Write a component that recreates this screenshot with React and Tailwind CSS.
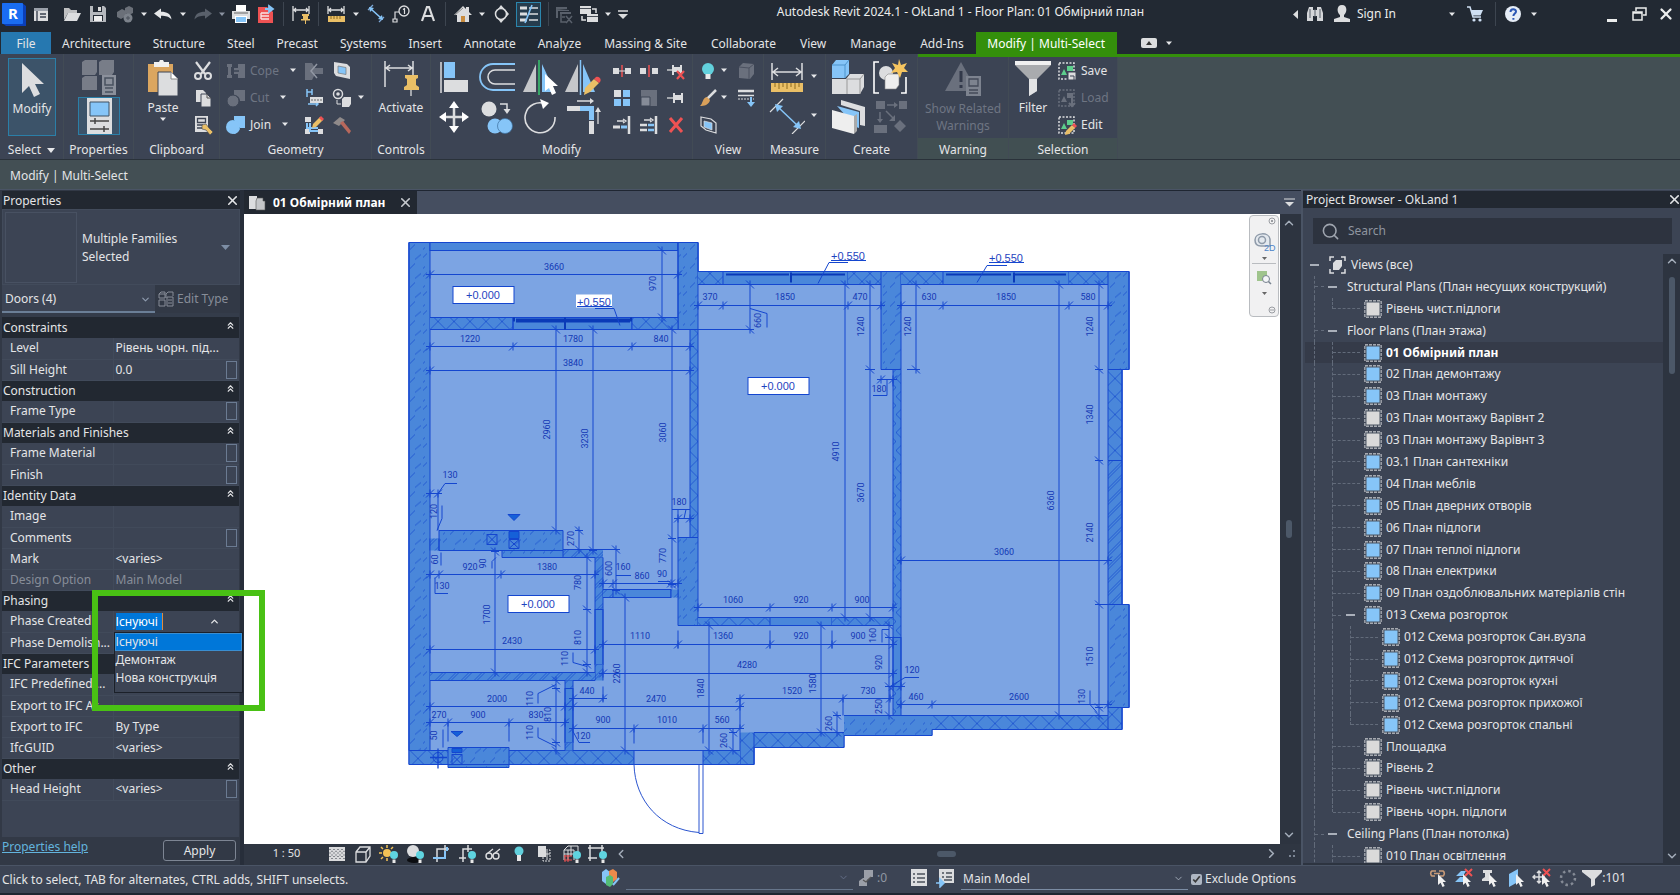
import { useState } from "react";
import { ChevronDown, ChevronLeft, ChevronRight, ChevronUp, ChevronsUp, Search, X } from "lucide-react";

const L = "#dcdddf";
const B = "#86c5f8";
const G = "#6a707d";
const Y = "#eabf66";
const R = "#ee5253";

const TABS = [
  "Architecture",
  "Structure",
  "Steel",
  "Precast",
  "Systems",
  "Insert",
  "Annotate",
  "Analyze",
  "Massing & Site",
  "Collaborate",
  "View",
  "Manage",
  "Add-Ins",
];

const PROPERTIES = [
  { group: "Constraints" },
  { name: "Level", value: "Рівень чорн. під..." },
  { name: "Sill Height", value: "0.0", assoc: true },
  { group: "Construction" },
  { name: "Frame Type", value: "", assoc: true },
  { group: "Materials and Finishes" },
  { name: "Frame Material", value: "", assoc: true },
  { name: "Finish", value: "", assoc: true },
  { group: "Identity Data" },
  { name: "Image", value: "" },
  { name: "Comments", value: "", assoc: true },
  { name: "Mark", value: "<varies>" },
  { name: "Design Option", value: "Main Model", disabled: true },
  { group: "Phasing" },
  { name: "Phase Created", phase: true },
  { name: "Phase Demolish...", value: "" },
  { group: "IFC Parameters" },
  { name: "IFC Predefined ...", value: "" },
  { name: "Export to IFC As", value: "" },
  { name: "Export to IFC", value: "By Type" },
  { name: "IfcGUID", value: "<varies>" },
  { group: "Other" },
  { name: "Head Height", value: "<varies>", assoc: true },
];

const PHASES = ["Існуючі", "Демонтаж", "Нова конструкція"];

// level, label, icon (b = on sheet, g = not on sheet), open node, last child
const TREE = [
  { level: 0, label: "Views (все)", open: true },
  { level: 1, label: "Structural Plans (План несущих конструкций)", open: true },
  { level: 2, label: "Рівень чист.підлоги", icon: "g", last: true },
  { level: 1, label: "Floor Plans (План этажа)", open: true },
  { level: 2, label: "01 Обмірний план", icon: "b", active: true },
  { level: 2, label: "02 План демонтажу", icon: "b" },
  { level: 2, label: "03 План монтажу", icon: "b" },
  { level: 2, label: "03 План монтажу Варівнт 2", icon: "g" },
  { level: 2, label: "03 План монтажу Варівнт 3", icon: "g" },
  { level: 2, label: "03.1 План сантехніки", icon: "b" },
  { level: 2, label: "04 План меблів", icon: "b" },
  { level: 2, label: "05 План дверних отворів", icon: "b" },
  { level: 2, label: "06 План підлоги", icon: "b" },
  { level: 2, label: "07 План теплої підлоги", icon: "b" },
  { level: 2, label: "08 План електрики", icon: "b" },
  { level: 2, label: "09 План оздоблювальних матеріалів стін", icon: "b" },
  { level: 2, label: "013 Схема розгорток", icon: "b", open: true },
  { level: 3, label: "012 Схема розгорток Сан.вузла", icon: "b" },
  { level: 3, label: "012 Схема розгорток дитячої", icon: "b" },
  { level: 3, label: "012 Схема розгорток кухні", icon: "b" },
  { level: 3, label: "012 Схема розгорток прихожої", icon: "b" },
  { level: 3, label: "012 Схема розгорток спальні", icon: "b", last: true },
  { level: 2, label: "Площадка", icon: "g" },
  { level: 2, label: "Рівень 2", icon: "g" },
  { level: 2, label: "Рівень чист.підлоги", icon: "g" },
  { level: 2, label: "Рівень чорн. підлоги", icon: "g", last: true },
  { level: 1, label: "Ceiling Plans (План потолка)", open: true },
  { level: 2, label: "010 План освітлення", icon: "g" },
];

/* ---------- icons ---------- */

const S = ({ s = 20, children }) => (
  <svg width={s} height={s} viewBox={`0 0 ${s} ${s}`} fill="none" className="shrink-0">
    {children}
  </svg>
);

const Caret = ({ dim }) => (
  <svg width="8" height="5" viewBox="0 0 8 5" className="shrink-0">
    <path d="M1 0.5h6L4 4z" fill={dim ? "#8b93a1" : "#e6e7ea"} />
  </svg>
);

const Bulb = ({ x = 0, y = 0 }) => (
  <g transform={`translate(${x} ${y})`}>
    <circle cx="4" cy="4" r="4" fill="#5fd4e0" />
    <path d="M2.5 8.5h3v3.5h-3z" fill="#e8e8e8" />
  </g>
);

const Cursor = ({ x = 0, y = 0 }) => (
  <path transform={`translate(${x} ${y})`} d="M0 0v11l2.6-2.3L4.5 13l2.2-1-1.9-4H8z" fill="#f0f0f0" />
);

const RevitLogo = () => (
  <svg width="25" height="25" viewBox="0 0 25 25" className="shrink-0">
    <path d="M1 1h20l4 3v20H5l-4-3z" fill="#0b3fb8" />
    <rect x="1" y="1" width="21" height="21" rx="1" fill="#1a6df2" />
    <text x="12" y="17" fontSize="15" fontWeight="700" fill="#fff" textAnchor="middle" fontFamily="Noto Sans, sans-serif">
      R
    </text>
  </svg>
);

const ICONS = {
  ui: (
    <S>
      <path d="M3 4h14v13H3z" fill={L} />
      <path d="M3 4h14v3H3z" fill="#9aa0aa" />
      <path d="M6 7v10M9 10h6M9 13h6" stroke="#3a4250" strokeWidth="1.4" />
    </S>
  ),
  open: (
    <S>
      <path d="M2 16V4h5l2 2h6v3H6L2 16z" fill="#bfc0c2" />
      <path d="M6 9h13l-4 8H2z" fill={L} />
    </S>
  ),
  save: (
    <S>
      <path d="M2 2h14l2 2v14H2z" fill="#b5b8bd" />
      <path d="M5 2h9v6H5zM5 11h10v6H5z" fill="#222933" />
      <path d="M6 12h8v5H6z" fill="#eee" />
      <path d="M10 3h3v4h-3z" fill="#ddd" />
    </S>
  ),
  sync: (
    <S>
      <path d="M2 8l5-3 4 2v5l-5 3-4-2zM10 4l4-2 4 2v5l-4 2-4-2z" fill="#6b7079" />
      <circle cx="13" cy="14" r="4.5" fill="#7c828b" />
      <path d="M11 14h4M13 12v4" stroke="#4a505b" />
    </S>
  ),
  undo: (
    <S>
      <path d="M1 9.500l7-5v3.200c6 0 10 2 10.500 7.800C16 12.500 13 11.700 8 11.700v3z" fill="#e6e7e9" />
    </S>
  ),
  redo: (
    <S>
      <path d="M19 9.500l-7-5v3.200c-6 0-10 2-10.500 7.800C4 12.500 7 11.700 12 11.700v3z" fill="#59606b" />
    </S>
  ),
  print: (
    <S>
      <path d="M5 1h10v6H5z" fill="#fff" />
      <path d="M1 7h18v8H1z" fill={L} />
      <path d="M3 9h14" stroke="#666" />
      <path d="M4 12h12v7H4z" fill="#fff" />
      <path d="M5 13h10v5H5z" fill={B} />
    </S>
  ),
  pdf: (
    <S>
      <path d="M2 3h9l6 5v11H2z" fill={R} />
      <path d="M5 9h8M5 12h8M5 15h8M5 15v-6" stroke="#fbe3e3" strokeWidth="1.300" />
      <path d="M9 5h6M13 2l4 3-4 3z" stroke={B} strokeWidth="1.800" fill={B} />
    </S>
  ),
  pinDim: (
    <S>
      <path d="M2 2v15M18 2v8M3 6h14M5 4L3 6l2 2M15 4l2 2-2 2" stroke={L} strokeWidth="1.300" />
      <path d="M11 10h7v2h-1v3h2v1.500h-9V15h2v-3h-1z" fill={Y} />
      <path d="M14.500 16v4" stroke={Y} />
    </S>
  ),
  measure: (
    <S>
      <path d="M2 2v8M18 2v8M3 6h14M5 4L3 6l2 2M15 4l2 2-2 2" stroke={L} strokeWidth="1.300" />
      <path d="M2 12h17v6H2z" fill={Y} />
      <path d="M5 12v3M8 12v3M11 12v3M14 12v3" stroke="#8d6a1c" />
    </S>
  ),
  aligned: (
    <S>
      <path d="M2 6l5-5M13 18l5-5" stroke="#7fa9d8" strokeWidth="1.300" />
      <path d="M5 5l10 9" stroke={B} strokeWidth="1.600" />
      <path d="M3 3l5 1-4 4zM17 16l-5-1 4-4z" fill={B} />
    </S>
  ),
  tag: (
    <S>
      <circle cx="13" cy="7" r="5" stroke={L} strokeWidth="1.300" />
      <path d="M12 5.500L13.500 4.500V10M8 8H4v7M2 15h4v3H2z" stroke={L} strokeWidth="1.200" />
    </S>
  ),
  text: (
    <S>
      <path d="M4 17L9 3h2l5 14M6 12h8" stroke={L} strokeWidth="2.200" />
    </S>
  ),
  home: (
    <S>
      <path d="M10 2L1 11h3v7h12v-7h3l-3-3V3h-3v2z" fill={L} />
      <path d="M10 4l-8 7" stroke="#888" />
      <path d="M8 12h4v6H8z" fill="#c98c3f" />
    </S>
  ),
  section: (
    <S>
      <path d="M10 1l8 9-8 9-3-4h6V5H7z" fill={L} />
      <circle cx="10" cy="10" r="5.500" fill="#222933" stroke={L} strokeWidth="1.500" />
    </S>
  ),
  thin: (
    <S>
      <path d="M1 4h7M1 10h7M1 16h7" stroke={L} strokeWidth="3" />
      <path d="M10 4h9M10 10h9M10 16h9" stroke={L} strokeWidth="1.300" />
      <path d="M13 1L6 19" stroke={B} strokeWidth="1.600" />
    </S>
  ),
  closeInactive: (
    <S>
      <path d="M2 3h11v2H2zM2 5v9h2V7h11V6M6 8h11v2H6z" fill="#59606b" />
      <path d="M7 9v9h5M12 12l6 7M18 12l-6 7M8 13h3" stroke="#59606b" strokeWidth="1.500" />
    </S>
  ),
  switchWin: (
    <S>
      <path d="M1 2h11v8H1zM8 10h11v8H8z" fill={L} />
      <path d="M1 4.500h11M8 12.500h11" stroke="#222933" strokeWidth=".8" />
      <path d="M13 5h4v4M3 12v4h4" stroke={L} strokeWidth="1.500" />
    </S>
  ),
  customize: (
    <S>
      <path d="M5 7h10" stroke={L} strokeWidth="1.500" />
      <path d="M5 10h10l-5 5z" fill={L} />
    </S>
  ),
  binoculars: (
    <S>
      <path d="M4 3h4v3h4V3h4l2 6v8h-6v-5H8v5H2V9z" fill="#d4d6d9" />
      <path d="M10 5v8M5 5v9M15 5v9" stroke="#555c67" />
    </S>
  ),
  user: (
    <S>
      <path d="M10 1c6 0 5 8 2 10v2l6 2v3H2v-3l6-2v-2C5 9 4 1 10 1z" fill={L} />
    </S>
  ),
  cart: (
    <S>
      <path d="M2 3h3l3 10h8" stroke="#cfe0f4" strokeWidth="1.500" />
      <path d="M6 6h12l-2.500 5.500H8z" fill="#cfe0f4" />
      <circle cx="9" cy="16" r="1.600" fill="#cfe0f4" />
      <circle cx="15" cy="16" r="1.600" fill="#cfe0f4" />
    </S>
  ),
  help: (
    <S>
      <circle cx="10" cy="10" r="8" fill="#e6edf7" />
      <path d="M7.500 8c0-3.500 5.500-3.500 5.500-.5 0 2-2.600 2-2.600 4.500M10.400 14v1.800" stroke="#2b57b5" strokeWidth="2" />
    </S>
  ),
  // ribbon
  modify: (
    <S s={36}>
      <path d="M8 1v30l7-7 5 11 6-3-5-10h9z" fill={L} />
    </S>
  ),
  typeProps: (
    <S s={36}>
      <path d="M1 3l3-2h12v12l-2 3H1zM18 3l3-2h12v12l-2 3H18zM1 19l3-2h12v14H1z" fill="#787d88" />
      <path d="M21 16h14v20H21z" fill="#8b909b" />
      <path d="M24 19h8v7h-8zM24 29h8M24 33h8" stroke="#4a5160" strokeWidth="1.500" />
    </S>
  ),
  properties: (
    <S s={36}>
      <path d="M6 0h25v36H6z" fill={L} />
      <path d="M9 4h19v14H9z" fill={B} stroke="#3f5063" />
      <path d="M9 23h19M14 20v6M9 31h19M23 28v6" stroke="#444" strokeWidth="1.500" />
    </S>
  ),
  paste: (
    <S s={36}>
      <path d="M3 4h25v28H3z" fill="#dba660" />
      <path d="M9 2h5l1-2h3l1 2h5v5H9z" fill="#f1f1f1" />
      <path d="M13 12h13l7 7v17H13z" fill={L} stroke="#3c4454" />
      <path d="M26 12v7h7" fill="#fff" stroke="#888" />
    </S>
  ),
  cut: (
    <S>
      <path d="M3 1l9 12M17 1L8 13" stroke={L} strokeWidth="2.200" />
      <circle cx="5" cy="15" r="3" stroke={L} strokeWidth="2" />
      <circle cx="15" cy="15" r="3" stroke={L} strokeWidth="2" />
    </S>
  ),
  copyClip: (
    <S>
      <path d="M3 2h7l3 3v9H3z" fill={L} />
      <path d="M8 6h6l4 4v9H8z" fill={L} stroke="#3c4454" />
      <path d="M14 6v4h4" stroke="#555" />
    </S>
  ),
  match: (
    <S>
      <path d="M2 1h13v16H2z" fill={L} />
      <path d="M4.500 3.500h8v4h-8zM4 10h6M4 13h5" stroke="#3c4454" strokeWidth="1.300" />
      <path d="M9 10l4-1 3 4 4 4-3 3-4-5-4-1z" fill={Y} stroke="#3c4454" strokeWidth=".6" />
    </S>
  ),
  cope: (
    <S>
      <path d="M1 3h5v3H5v8h1v3H1v-3h1V6H1zM12 3h7v14h-7v-4h-4V7h4z" fill={G} />
      <path d="M6 10h7" stroke="#3c4454" strokeWidth="1.500" />
    </S>
  ),
  cutGeo: (
    <S>
      <path d="M8 2h11v11h-5a6 6 0 0 0-6-6z" fill={G} />
      <circle cx="7" cy="13" r="6" fill={G} stroke="#3c4454" />
    </S>
  ),
  join: (
    <S>
      <path d="M8 1h11v12h-5a8 8 0 0 1-6 6z" fill={B} />
      <circle cx="7" cy="12" r="7" fill={B} />
      <path d="M8 5v1M14 13h-1" stroke="#5a9dd0" />
    </S>
  ),
  wallJoin: (
    <S>
      <path d="M1 2h7l3 5h8v6h-8l-3 6H1z" fill={G} />
      <path d="M13 3l-6 7 6 7" stroke="#9298a4" strokeWidth="1.500" />
    </S>
  ),
  paint: (
    <S>
      <path d="M2 1l13 2 3 3v12L4 15l-2-3z" fill={L} />
      <path d="M6 5l8 1.500v7L6 12z" fill={B} stroke="#777" strokeWidth=".7" />
    </S>
  ),
  demolishJoin: (
    <S>
      <path d="M3 1v8M8 1v6M3 4h5M4 16h10M12 14l2 2-2 2" stroke={B} strokeWidth="1.500" />
      <path d="M6 9h13v6H6z" fill={L} />
      <path d="M7 12h12" stroke="#666" strokeDasharray="2 1" />
    </S>
  ),
  splitFace: (
    <S>
      <circle cx="6" cy="6" r="4.500" stroke={L} strokeWidth="1.500" />
      <circle cx="6" cy="6" r="1.800" fill={L} />
      <path d="M5 12v4h4" stroke={L} />
      <path d="M10 11l2-2h7v7l-2 3h-7z" fill={L} />
    </S>
  ),
  beam: (
    <S>
      <path d="M1 2h6v5H1zM1 14h5v5H1zM14 14h5v5h-5z" fill={L} />
      <path d="M3 8v5h3v3h8M6 8v5h8" stroke={B} strokeWidth="2" />
      <path d="M9 9l7-7 3 3-7 7-4 1z" fill={Y} />
      <path d="M15 3l2-2 3 3-2 2z" fill={R} />
    </S>
  ),
  hammer: (
    <S>
      <path d="M1 8l7-6 5 3-6 6z" fill="#8f8a8a" />
      <path d="M8 8l3-2 8 10-2 3z" fill="#b8685c" />
    </S>
  ),
  activate: (
    <S s={36}>
      <path d="M2 1v26M30 1v14M3 8h26M7 5L3 8l4 3M25 5l4 3-4 3" stroke={L} strokeWidth="1.500" />
      <path d="M22 15h13v3l-2 1v6l3 2v3H21v-3l3-2v-6l-2-1z" fill={Y} />
      <path d="M28 30v6" stroke={L} strokeWidth="1.300" />
    </S>
  ),
  align: (
    <S s={36}>
      <path d="M5 3v31" stroke={L} strokeWidth="1.500" />
      <path d="M8 3h11v16H8z" fill={B} />
      <path d="M8 21h24v12H8z" fill={L} />
    </S>
  ),
  offset: (
    <S s={36}>
      <path d="M36 5H14a13 13 0 0 0 0 26h22" stroke={B} strokeWidth="1.800" />
      <path d="M36 11H16a7 7 0 0 0 0 14h20" stroke={L} strokeWidth="1.500" />
    </S>
  ),
  mirrorPick: (
    <S s={36}>
      <path d="M14 5v28H1z" fill="#c5c7ca" />
      <path d="M20 5v28h13z" fill={B} />
      <path d="M17 1v35" stroke="#38b26a" strokeWidth="1.800" />
      <path d="M23 15v17l4-3 3 7 4-2-3-7h5z" fill="#fff" />
    </S>
  ),
  mirrorDraw: (
    <S s={36}>
      <path d="M13 5v28H0z" fill="#c5c7ca" />
      <path d="M18 5v28h12z" fill={B} />
      <path d="M15.500 1v35" stroke={B} strokeWidth="1.500" />
      <path d="M20 29l9-9 5 4-9 9-6 3z" fill={Y} />
      <path d="M29 20l2-2c3-1 6 2 4 5l-1 1z" fill={R} />
    </S>
  ),
  move: (
    <S s={36}>
      <path d="M18 8v22M7 19h22" stroke={L} strokeWidth="2.500" />
      <path d="M18 3l5 7H13zM18 35l5-7H13zM3 19l7-5v10zM33 19l-7-5v10z" fill="#fff" />
    </S>
  ),
  copy: (
    <S s={36}>
      <circle cx="10" cy="11" r="7.500" fill={L} />
      <path d="M21 6h7v7" stroke={L} strokeWidth="1.500" />
      <path d="M28 16l-3.500-5h7z" fill={L} />
      <circle cx="16" cy="28" r="7.500" fill={B} />
      <circle cx="26" cy="28" r="7.500" fill={B} stroke="#3c6f9c" strokeWidth=".7" />
    </S>
  ),
  rotate: (
    <S s={36}>
      <path d="M24 6A15 15 0 1 0 33 19" stroke={L} strokeWidth="1.600" />
      <path d="M18 1l9 4-6 6z" fill="#fff" />
    </S>
  ),
  trim: (
    <S s={36}>
      <path d="M2 8h13v5H2zM24 23h5v13h-5z" fill={L} />
      <path d="M15 8h14v14h-5v-9h-9z" fill={B} />
      <path d="M12 3h13M33 26V13" stroke={L} strokeWidth="1.300" />
      <path d="M25 0l4 3-4 3zM30 14l3-5 3 5z" fill={L} />
    </S>
  ),
  split: (
    <S>
      <path d="M1 7h6v6H1zM13 7h6v6h-6z" fill={L} />
      <path d="M10 4v12" stroke={R} strokeWidth="1.500" />
      <path d="M7 10h6" stroke={L} />
    </S>
  ),
  splitGap: (
    <S>
      <path d="M1 7h6v6H1zM13 7h6v6h-6z" fill={L} />
      <path d="M10 4v12" stroke={R} strokeWidth="1.500" />
    </S>
  ),
  unpin: (
    <S>
      <path d="M1 9h5" stroke={L} strokeWidth="1.300" />
      <path d="M6 4h2v2h6V4h2v10h-2v-3H8v3H6z" fill={L} />
      <path d="M11 10l7 8M18 10l-7 8" stroke={R} strokeWidth="2.200" />
    </S>
  ),
  array: (
    <S>
      <path d="M11 11h7v7h-7z" fill={B} />
      <path d="M11 2h7v7h-7zM2 11h7v7H2z" fill={B} />
      <path d="M2 2h7v7H2z" fill={L} />
    </S>
  ),
  scale: (
    <S>
      <path d="M2 2h16v16H2z" fill={G} />
      <path d="M2 9h9v9H2z" fill="#868c98" stroke="#3c4454" />
    </S>
  ),
  pin: (
    <S>
      <path d="M1 10h6" stroke={L} strokeWidth="1.300" />
      <path d="M7 5h2v2h6V5h2v10h-2v-3H9v3H7z" fill={L} />
    </S>
  ),
  trimOne: (
    <S>
      <path d="M17 1v18" stroke={L} strokeWidth="2.500" />
      <path d="M1 12h7" stroke={L} strokeWidth="3" />
      <path d="M9 12h6" stroke={B} strokeWidth="3" />
      <path d="M5 6h7M11 4l3 2-3 2" stroke={L} strokeWidth="1.300" />
    </S>
  ),
  trimMulti: (
    <S>
      <path d="M17 1v18" stroke={L} strokeWidth="2.500" />
      <path d="M1 10h7M1 15h7" stroke={L} strokeWidth="2.500" />
      <path d="M9 10h6M9 15h6" stroke={B} strokeWidth="2.500" />
      <path d="M5 5h7M11 3l3 2-3 2" stroke={L} strokeWidth="1.300" />
    </S>
  ),
  del: (
    <S>
      <path d="M4 3l12 14M16 3L4 17" stroke={R} strokeWidth="3" />
    </S>
  ),
  bulb: (
    <S>
      <circle cx="10" cy="8" r="6" fill="#62d0dc" />
      <path d="M7.500 13h5v5h-5z" fill="#e8e8e8" />
    </S>
  ),
  brush: (
    <S>
      <path d="M18 2l-9 9" stroke={L} strokeWidth="2.500" />
      <path d="M9 9l3 3c-1 5-6 6-10 6 3-2 2-8 7-9z" fill="#d9a05a" />
    </S>
  ),
  box3d: (
    <S>
      <path d="M3 6l4-4 11 1v10l-4 5-11-1z" fill={G} />
      <path d="M3 6l10 1v11M13 7l5-4" stroke="#4b5160" />
    </S>
  ),
  lines: (
    <S>
      <path d="M2 3h16" stroke={L} strokeWidth="2.500" />
      <path d="M2 7.500h16" stroke={L} strokeWidth="1.500" />
      <path d="M2 11h16" stroke={L} strokeDasharray="2 1" />
      <path d="M15 9v6" stroke={B} strokeWidth="2" />
      <path d="M11 14h8l-4 5z" fill={B} />
    </S>
  ),
  selBox: (
    <S>
      <path d="M3 2l10 2 5 4v10L8 15l-5-4z" stroke={L} strokeWidth="1.200" />
      <path d="M6 6l8 2v7L6 12z" fill={B} stroke={L} strokeWidth=".7" />
    </S>
  ),
  tape: (
    <S s={36}>
      <path d="M3 4v17M33 4v17M4 13h28M9 9l-5 4 5 4M27 9l5 4-5 4" stroke={L} strokeWidth="1.500" />
      <path d="M2 24h32v9H2z" fill={Y} />
      <path d="M6 24v4M10 24v6M14 24v4M18 24v6M22 24v4M26 24v6M30 24v4" stroke="#8d6a1c" />
    </S>
  ),
  dim: (
    <S s={36}>
      <path d="M1 14L14 1M23 36l13-13" stroke={L} strokeWidth="1.200" />
      <path d="M9 9l20 19" stroke={B} strokeWidth="1.500" />
      <path d="M6 6l8 2-6 6zM32 31l-8-2 6-6z" fill={B} />
    </S>
  ),
  assembly: (
    <S s={36}>
      <path d="M2 6l4-5h13v14l-4 4H2z" fill={B} />
      <path d="M2 6h13v13M15 6l4-5" stroke="#4c93cc" />
      <path d="M2 20h14l4-5h14v13l-4 7H2z" fill={L} />
      <path d="M17 35V20h13v15M30 20l4-5" stroke="#999" />
    </S>
  ),
  group: (
    <S s={36}>
      <path d="M7 3H2v31h5M29 34h5V18" stroke="#fff" strokeWidth="1.600" />
      <circle cx="14" cy="14" r="7" fill={L} />
      <path d="M13 18l3-3h11v11l-3 4H13z" fill="#eee" stroke="#888" strokeWidth=".6" />
      <path d="M27 0l2 6 6-2-3 5 4 4-6 0-2 6-3-6-6 1 4-5-3-5 6 2z" fill="#f6c560" />
    </S>
  ),
  parts: (
    <S s={36}>
      <path d="M11 2l24 7v19l-5-1V13L11 7z" fill={L} />
      <path d="M7 8l22 6v16l-3-1" fill={B} />
      <path d="M2 12l22 6v18L2 30z" fill="#eee" />
      <path d="M24 18l3-2v17l-3 3z" fill="#aaa" />
    </S>
  ),
  similar: (
    <S s={36}>
      <path d="M4 3h9v8H4zM27 3h8v8h-8zM2 27h13v8H2zM28 22l6 6-6 6-6-6z" fill={G} />
      <path d="M15 7h8M8 14v8M14 13l8 8" stroke={G} strokeWidth="1.500" />
      <path d="M22 4l4 3-4 3zM5 21h6l-3 4zM23 17v6h-6z" fill={G} />
    </S>
  ),
  warning: (
    <S s={36}>
      <path d="M16 2l16 29H0z" fill={G} />
      <path d="M16 11v11M16 25v3" stroke="#32394a" strokeWidth="3" />
      <path d="M21 16h15v20H21z" fill="#7d838f" />
      <path d="M24 19h9v7h-9zM24 30h9M24 33h9" stroke="#444b5a" strokeWidth="1.300" />
    </S>
  ),
  filter: (
    <S s={36}>
      <path d="M0 1h36v4L22 19v12l-8 5V19L0 5z" fill="#a9abae" />
      <path d="M0 1h36v4H0z" fill="#f0f0f0" />
      <path d="M14 19h8v12l-8 5z" fill="#e2e3e5" />
    </S>
  ),
};

const SelIcon = ({ kind }) => {
  const c = kind === "load" ? G : "#5dce8c";
  return (
    <S>
      <path d="M2 2h15v16H2z" stroke={kind === "load" ? G : L} strokeWidth="1.500" strokeDasharray="2 1.500" />
      <path d="M10 5h6v5h-6zM4 14l3-6 3 6z" fill={c} />
      {kind === "save" && <path d="M11 11h8v8h-8zM13 15h4v4" fill={L} stroke="#3c4454" />}
      {kind === "load" && <path d="M15 9v9M12 15l3 3 3-3" stroke={G} strokeWidth="2" />}
      {kind === "edit" && (
        <>
          <path d="M9 16l6-6 3 3-6 6-4 1z" fill={Y} />
          <path d="M15 10l2-2 3 3-2 2z" fill={R} />
        </>
      )}
    </S>
  );
};

const IconBtn = ({ icon, label, className = "" }) => (
  <button type="button" aria-label={label || icon} className={`flex shrink-0 items-center justify-center ${className}`}>
    {ICONS[icon]}
  </button>
);

const CaretBtn = ({ dim, className = "w-[10px]" }) => (
  <button type="button" aria-label="More" className={`flex shrink-0 items-center justify-center ${className}`}>
    <Caret dim={dim} />
  </button>
);

const Sep = () => <span className="mx-[2px] h-6 w-px shrink-0 bg-[#3d4550]" />;

/* ---------- title bar ---------- */

function TitleBar() {
  return (
    <header className="flex h-8 items-center bg-[#222933] pr-[5px] pb-1">
      <div className="flex items-center gap-[5px] pl-px">
        <RevitLogo />
        <IconBtn icon="ui" />
        <IconBtn icon="open" className="ml-[6px]" />
        <IconBtn icon="save" className="ml-px" />
        <IconBtn icon="sync" className="ml-[2px]" />
        <CaretBtn className="w-[8px]" />
        <IconBtn icon="undo" />
        <CaretBtn />
        <IconBtn icon="redo" />
        <CaretBtn dim className="w-[8px]" />
        <IconBtn icon="print" />
        <IconBtn icon="pdf" />
        <Sep />
        <IconBtn icon="pinDim" />
        <Sep />
        <IconBtn icon="measure" />
        <CaretBtn />
        <IconBtn icon="aligned" />
        <IconBtn icon="tag" />
        <IconBtn icon="text" className="ml-[2px]" />
        <Sep />
        <IconBtn icon="home" />
        <CaretBtn className="w-[8px]" />
        <IconBtn icon="section" />
        <IconBtn icon="thin" className="h-[25px] w-[25px] border border-[#2b86ad] bg-[#263c4d]" />
        <Sep />
        <IconBtn icon="closeInactive" className="-ml-[2px]" />
        <IconBtn icon="switchWin" />
        <CaretBtn className="w-[8px]" />
        <IconBtn icon="customize" className="-ml-1" />
      </div>
      <h1 className="mb-1 min-w-0 flex-1 truncate text-center text-[12px] text-[#eceded]">
        Autodesk Revit 2024.1 - OkLand 1 - Floor Plan: 01 Обмірний план
      </h1>
      <div className="flex items-center">
        <button type="button" aria-label="Collapse search" className="flex w-4 justify-center">
          <svg width="5" height="9" viewBox="0 0 5 9">
            <path d="M5 0v9L0 4.500z" fill={L} />
          </svg>
        </button>
        <IconBtn icon="binoculars" className="ml-px" />
        <button type="button" className="ml-[7px] flex items-center gap-[5px] text-[12px] text-[#eceded]">
          {ICONS.user} Sign In
        </button>
        <CaretBtn className="ml-[51px] w-[10px]" />
        <IconBtn icon="cart" className="mr-2 ml-2" />
        <Sep />
        <IconBtn icon="help" className="ml-[5px]" />
        <CaretBtn className="ml-[6px] w-[10px]" />
        <button type="button" aria-label="Minimize" className="ml-16 flex h-5 w-[18px] items-end justify-center pb-[2px]">
          <span className="h-[3px] w-[10px] bg-[#eceded]" />
        </button>
        <button type="button" aria-label="Restore" className="ml-2 flex w-5 justify-center">
          <svg width="15" height="14" viewBox="0 0 15 14" fill="none" stroke="#eceded" strokeWidth="1.500">
            <path d="M4 4V1h10v7h-3M1 5h9v8H1zM1 6h9" />
          </svg>
        </button>
        <button type="button" aria-label="Close" className="ml-2 flex justify-center">
          <X size={18} strokeWidth={3} color="#eceded" />
        </button>
      </div>
    </header>
  );
}

function TabStrip() {
  return (
    <nav className="flex h-[22px] bg-[#222933] pl-px text-[12px] text-[#e4e5e7]">
      <button type="button" className="w-[50px] bg-[#2678b0] pt-px">
        File
      </button>
      {TABS.map((tab, i) => (
        <button key={tab} type="button" className={`pt-px whitespace-nowrap ${i < 8 ? "px-[11px]" : "px-3"}`}>
          {tab}
        </button>
      ))}
      <button type="button" className="w-[141px] bg-[#348f0b] pt-px text-white">
        Modify | Multi-Select
      </button>
      <button type="button" aria-label="Ribbon display" className="ml-6 flex items-center gap-2">
        <svg width="16" height="10" viewBox="0 0 16 10">
          <rect width="16" height="10" rx="2" fill={L} />
          <path d="M5 7h6L8 3z" fill="#333" />
        </svg>
        <Caret />
      </button>
    </nav>
  );
}

/* ---------- ribbon ---------- */

function Panel({ title, className, contextual, children, caret }) {
  return (
    <section
      className={`flex shrink-0 flex-col border-r border-[#424b55] ${contextual ? "" : "pt-[3px]"} ${className}`}
    >
      <div className="flex h-[81px]">{children}</div>
      <h2
        className={`flex h-[21px] items-center justify-center gap-[6px] pt-[3px] text-[12px] ${contextual ? "bg-[#414f52]" : ""}`}
      >
        {title}
        {caret && (
          <svg width="8" height="5" viewBox="0 0 8 5">
            <path d="M0 0h8L4 5z" fill="#e6e7ea" />
          </svg>
        )}
      </h2>
    </section>
  );
}

const SmallCol = ({ className = "", children }) => (
  <div className={`grid grid-rows-[27px_27px_27px] items-center ${className}`}>{children}</div>
);

const BigCol = ({ className = "", children }) => (
  <div className={`grid grid-rows-[39px_39px] items-center justify-items-center ${className}`}>{children}</div>
);

const TextTool = ({ icon, label, disabled, caret, gap = "gap-1" }) => (
  <button
    type="button"
    disabled={disabled}
    className={`flex items-center ${gap} text-[12px] ${disabled ? "text-[#6e7583]" : ""}`}
  >
    {icon}
    {label}
    {caret && (
      <span className="ml-[6px]">
        <Caret />
      </span>
    )}
  </button>
);

function Ribbon() {
  return (
    <div className="flex h-[106px] border-b border-[#2a323a] bg-[#434f54] text-[#e4e5e7]">
      <div className="flex bg-[#3c4454]">
        <Panel title="Select" caret className="w-[64px]">
          <button
            type="button"
            className="mt-px ml-2 flex h-[78px] w-12 flex-col items-center border border-[#2b7fa8] bg-[#3c5369] pt-[3px] text-[12px]"
          >
            {ICONS.modify}
            <span className="mt-[2px]">Modify</span>
          </button>
        </Panel>
        <Panel title="Properties" className="w-[70px]">
          <BigCol className="mx-auto">
            <IconBtn icon="typeProps" />
            <IconBtn icon="properties" className="w-[42px] border border-[#2b7fa8] bg-[#3c5369]" />
          </BigCol>
        </Panel>
        <Panel title="Clipboard" className="w-[86px]">
          <button type="button" className="ml-[11px] flex w-[36px] flex-col items-center pt-[3px] text-[12px]">
            {ICONS.paste}
            <span className="mt-[3px]">Paste</span>
            <Caret />
          </button>
          <SmallCol className="ml-[12px]">
            <IconBtn icon="cut" />
            <IconBtn icon="copyClip" />
            <IconBtn icon="match" />
          </SmallCol>
        </Panel>
        <Panel title="Geometry" className="w-[152px]">
          <SmallCol className="w-[76px] pl-[6px]">
            <TextTool icon={ICONS.cope} label="Cope" disabled caret />
            <TextTool icon={ICONS.cutGeo} label="Cut" disabled caret />
            <TextTool icon={ICONS.join} label="Join" caret />
          </SmallCol>
          <SmallCol className="ml-2">
            <IconBtn icon="wallJoin" />
            <IconBtn icon="demolishJoin" />
            <IconBtn icon="beam" />
          </SmallCol>
          <SmallCol className="ml-2">
            <IconBtn icon="paint" />
            <IconBtn icon="splitFace" />
            <IconBtn icon="hammer" />
          </SmallCol>
          <div className="flex items-center pl-1">
            <CaretBtn />
          </div>
        </Panel>
        <Panel title="Controls" className="w-[59px]">
          <button type="button" className="flex w-full flex-col items-center pt-[3px] text-[12px]">
            {ICONS.activate}
            <span className="mt-[3px]">Activate</span>
          </button>
        </Panel>
        <Panel title="Modify" className="w-[262px]">
          <BigCol className="ml-px w-[172px] grid-cols-4">
            <IconBtn icon="align" />
            <IconBtn icon="offset" />
            <IconBtn icon="mirrorPick" />
            <IconBtn icon="mirrorDraw" />
            <IconBtn icon="move" />
            <IconBtn icon="copy" />
            <IconBtn icon="rotate" />
            <IconBtn icon="trim" />
          </BigCol>
          <SmallCol className="ml-1 w-[81px] grid-cols-3">
            <IconBtn icon="split" />
            <IconBtn icon="splitGap" />
            <IconBtn icon="unpin" />
            <IconBtn icon="array" />
            <IconBtn icon="scale" />
            <IconBtn icon="pin" />
            <IconBtn icon="trimOne" />
            <IconBtn icon="trimMulti" />
            <IconBtn icon="del" />
          </SmallCol>
        </Panel>
        <Panel title="View" className="w-[71px]">
          <SmallCol className="ml-1 grid-cols-[22px_14px_26px]">
            <IconBtn icon="bulb" />
            <CaretBtn />
            <IconBtn icon="box3d" />
            <IconBtn icon="brush" />
            <CaretBtn />
            <IconBtn icon="lines" />
            <IconBtn icon="selBox" />
          </SmallCol>
        </Panel>
        <Panel title="Measure" className="w-[62px]">
          <BigCol className="ml-[3px] grid-cols-[40px_14px]">
            <IconBtn icon="tape" />
            <CaretBtn />
            <IconBtn icon="dim" />
            <CaretBtn />
          </BigCol>
        </Panel>
        <Panel title="Create" className="w-[92px]">
          <BigCol className="ml-px w-[84px] grid-cols-2">
            <IconBtn icon="assembly" />
            <IconBtn icon="group" />
            <IconBtn icon="parts" />
            <IconBtn icon="similar" />
          </BigCol>
        </Panel>
      </div>
      <div className="flex-1 border-t-3 border-[#348f0b]">
        <div className="flex w-fit bg-[#3c4454]">
          <Panel contextual title="Warning" className="w-[91px]">
            <button type="button" disabled className="flex w-full flex-col items-center pt-[3px] text-[12px] leading-[17px] text-[#6e7583]">
              {ICONS.warning}
              <span className="mt-1">Show Related</span>
              Warnings
            </button>
          </Panel>
          <Panel contextual title="Selection" className="w-[109px]">
            <button type="button" className="ml-[6px] flex flex-col items-center pt-[3px] text-[12px]">
              {ICONS.filter}
              <span className="mt-[3px]">Filter</span>
            </button>
            <SmallCol className="ml-[6px]">
              <TextTool icon={<SelIcon kind="save" />} label="Save" />
              <TextTool icon={<SelIcon kind="load" />} label="Load" disabled />
              <TextTool icon={<SelIcon kind="edit" />} label="Edit" />
            </SmallCol>
          </Panel>
        </div>
      </div>
    </div>
  );
}

/* ---------- properties palette ---------- */

function PhaseField() {
  const [phase, setPhase] = useState(PHASES[0]);

  return (
    <div className="relative flex h-full items-center">
      <input
        aria-label="Phase Created"
        value={phase}
        onChange={(e) => setPhase(e.target.value)}
        className="ml-[2px] h-[17px] w-[47px] border-r border-[#e08a3c] bg-[#0077d9] text-[12px] text-white outline-none"
      />
      <button type="button" aria-label="Toggle phases" className="ml-[46px]">
        <ChevronUp size={11} strokeWidth={3} />
      </button>
      <ul
        role="listbox"
        className="absolute top-full left-0 z-10 h-[61px] w-[129px] border border-[#1b2029] bg-[#3c4454] text-[12px] leading-[17px]"
      >
        {PHASES.map((p, i) => (
          <li
            key={p}
            role="option"
            aria-selected={i === 0}
            onClick={() => setPhase(p)}
            className={i === 0 ? "h-[18px] border border-[#3b8ed0] bg-[#0077d9] leading-4" : "h-[18px] pl-px"}
          >
            {p}
          </li>
        ))}
      </ul>
      <div className="pointer-events-none absolute -top-[21px] -left-[22px] z-20 h-[121px] w-[173px] border-6 border-[#49c114]" />
    </div>
  );
}

function PropertiesPalette() {
  return (
    <aside className="flex w-[244px] shrink-0 flex-col border-r-4 border-[#272e3a] bg-[#323946] pt-px pl-[2px] text-[12px] text-[#e4e5e7]">
      <div className="flex h-[18px] shrink-0 items-center justify-between bg-[#222831] pl-px">
        <h2 className="pt-px">Properties</h2>
        <button type="button" aria-label="Close properties">
          <X size={15} strokeWidth={2.5} />
        </button>
      </div>
      <div className="flex h-[76px] shrink-0 items-center border border-[#424b5b] bg-[#3c4454] pl-[2px]">
        <div className="h-[71px] w-[72px] border border-[#485162]" />
        <p className="ml-[5px] flex-1 pt-px leading-[18px]">
          Multiple Families
          <br />
          Selected
        </p>
        <button type="button" aria-label="Type list" className="mr-[9px]">
          <svg width="9" height="5" viewBox="0 0 9 5">
            <path d="M0 0h9L4.500 5z" fill="#7d8ea5" />
          </svg>
        </button>
      </div>
      <div className="flex h-[28px] shrink-0">
        <label className="relative flex w-[153px] items-center border-b-2 border-[#6b7f97] bg-[#3c4454] pt-[2px]">
          <select aria-label="Category filter" className="w-full appearance-none bg-transparent pl-[3px] outline-none">
            <option>Doors (4)</option>
          </select>
          <ChevronDown size={11} strokeWidth={2.5} className="absolute right-[4px] text-[#8f9caf]" />
        </label>
        <button type="button" disabled className="flex flex-1 items-center gap-[3px] pl-[3px] text-[#878d98]">
          <svg width="16" height="16" viewBox="0 0 16 16" fill="none" stroke="#878d98">
            <path d="M1 3l2-2h4v6H1zM8 3l2-2h5v4M1 9h6v6H1zM9 6h6v9H9zM10 9h4M10 12h4M1 3h6M8 3v4" />
          </svg>
          Edit Type
        </button>
      </div>
      <div className="mr-[1px] flex-1 border-t-4 border-[#343c4a] bg-[#3c4454]">
        <table className="w-full table-fixed border-collapse">
          <colgroup>
            <col className="w-[111px]" />
            <col />
            <col className="w-[13px]" />
          </colgroup>
          <tbody>
            {PROPERTIES.map((row) =>
              row.group ? (
                <tr key={row.group} className="h-[21px] bg-[#222831]">
                  <th colSpan={2} className="p-0 pl-px text-left font-normal">
                    {row.group}
                  </th>
                  <td className="p-0">
                    <button type="button" aria-label="Collapse group" className="mb-1 block">
                      <ChevronsUp size={11} strokeWidth={2.5} className="-ml-px" />
                    </button>
                  </td>
                </tr>
              ) : (
                <tr key={row.name} className={`h-[21px] ${row.disabled ? "text-[#878d98]" : ""}`}>
                  <th className="truncate border-r border-b border-[#414a5a] p-0 pl-2 text-left font-normal">
                    {row.name}
                  </th>
                  {row.phase ? (
                    <td colSpan={2} className="h-[21px] p-0">
                      <PhaseField />
                    </td>
                  ) : (
                    <>
                      <td className="border-b border-[#414a5a] p-0 pl-[2px] whitespace-nowrap">{row.value}</td>
                      <td className="border-b border-[#414a5a] p-0">
                        {row.assoc && (
                          <button
                            type="button"
                            aria-label={`Associate ${row.name}`}
                            className="block h-[18px] w-[11px] border border-[#6b7b92]"
                          />
                        )}
                      </td>
                    </>
                  )}
                </tr>
              ),
            )}
          </tbody>
        </table>
      </div>
      <div className="flex h-[28px] shrink-0 items-center justify-between pr-1">
        <a href="#help" className="mb-2 text-[#63b4dd] underline">
          Properties help
        </a>
        <button type="button" className="mb-px h-[21px] w-[73px] rounded-[3px] border border-[#7d8593]">
          Apply
        </button>
      </div>
    </aside>
  );
}

/* ---------- floor plan ---------- */

// [x, y, w, h, hatch]
const WALLS = [
  [409, 242, 21, 508, "conc"],
  [430, 242, 248, 8],
  [678, 242, 20, 87, "conc"],
  [430, 317, 83, 12, "cross"],
  [513, 317, 119, 12],
  [632, 317, 46, 12, "cross"],
  [690, 329, 8, 208, "zig"],
  [678, 537, 20, 88, "conc"],
  [698, 271, 25, 13, "cross"],
  [723, 271, 125, 13],
  [848, 271, 33, 13, "cross"],
  [881, 271, 20, 98, "conc"],
  [901, 271, 42, 13, "cross"],
  [943, 271, 126, 13],
  [1069, 271, 39, 13, "cross"],
  [1108, 271, 21, 98, "conc"],
  [893, 369, 8, 268, "zig"],
  [893, 637, 8, 49],
  [893, 686, 8, 29, "zig"],
  [1108, 369, 14, 91, "crossV"],
  [1108, 460, 14, 144, "brick"],
  [1108, 604, 21, 103, "conc"],
  [932, 715, 176, 14, "crossB"],
  [1108, 707, 14, 22, "crossB"],
  [844, 715, 88, 20, "conc"],
  [754, 732, 90, 15, "crossC"],
  [740, 732, 14, 32, "crossC"],
  [703, 750, 37, 14, "crossC"],
  [509, 750, 125, 14, "crossC"],
  [409, 750, 40, 14, "crossC"],
  [448, 747, 61, 20, "conc"],
  [439, 530, 124, 20, "conc"],
  [502, 550, 61, 7, "conc"],
  [563, 549, 40, 8, "brick"],
  [595, 557, 8, 52, "brick"],
  [595, 609, 8, 55],
  [595, 664, 8, 16, "brick"],
  [430, 672, 165, 8, "brick"],
  [565, 680, 8, 8, "brick"],
  [565, 688, 8, 54],
  [565, 742, 8, 8, "brick"],
  [603, 589, 10, 8, "brick"],
  [613, 589, 58, 8],
  [671, 589, 7, 8, "brick"],
  [698, 617, 72, 8, "zigH"],
  [770, 617, 62, 8],
  [832, 617, 61, 8, "zigH"],
  [430, 538, 9, 12, "brick"],
];

// horizontal dimension strings: [y, ...tick positions]
const H_DIMS = [
  [274, 430, 678],
  [346, 430, 513, 632, 690],
  [370, 430, 690],
  [305, 698, 723, 848, 881],
  [305, 901, 943, 1069, 1108],
  [574, 430, 439, 501, 595],
  [649, 430, 595],
  [607, 698, 770, 832, 893],
  [644, 603, 678, 770, 832, 893],
  [673, 603, 893],
  [698, 573, 603],
  [698, 740, 843, 890],
  [706, 430, 565],
  [706, 573, 740],
  [722, 430, 448, 509, 565],
  [728, 573, 634, 703, 740],
  [583, 603, 613, 671, 678],
  [560, 901, 1108],
  [704, 901, 932, 1108],
  [493, 430, 438],
  [518, 678, 690],
  [379, 881, 893],
  [686, 893, 901],
];

// vertical dimension strings: [x, ...tick positions]
const V_DIMS = [
  [662, 250, 317],
  [556, 329, 530],
  [593, 329, 550],
  [672, 329, 538, 584],
  [750, 284, 329],
  [845, 284, 617],
  [870, 284, 369, 617],
  [916, 284, 369],
  [1059, 284, 715],
  [1099, 284, 369, 460, 604, 707, 715],
  [495, 551, 672],
  [587, 557, 609, 664, 672],
  [579, 530, 549],
  [616, 549, 590],
  [625, 597, 750],
  [709, 625, 750],
  [821, 625, 732],
  [889, 625, 637, 686, 715],
  [556, 680, 688, 742, 750],
  [733, 732, 750],
  [837, 715, 732],
];

const LABELS = [
  [554, 266, "3660"],
  [470, 338, "1220"],
  [573, 338, "1780"],
  [661, 338, "840"],
  [573, 362, "3840"],
  [710, 296, "370"],
  [785, 296, "1850"],
  [860, 296, "470"],
  [929, 296, "630"],
  [1006, 296, "1850"],
  [1088, 296, "580"],
  [470, 566, "920"],
  [547, 566, "1380"],
  [512, 640, "2430"],
  [733, 599, "1060"],
  [801, 599, "920"],
  [862, 599, "900"],
  [640, 635, "1110"],
  [723, 635, "1360"],
  [801, 635, "920"],
  [858, 635, "900"],
  [747, 664, "4280"],
  [587, 690, "440"],
  [792, 690, "1520"],
  [868, 690, "730"],
  [497, 698, "2000"],
  [656, 698, "2470"],
  [439, 714, "270"],
  [478, 714, "900"],
  [536, 714, "830"],
  [603, 719, "900"],
  [667, 719, "1010"],
  [722, 719, "560"],
  [642, 575, "860"],
  [662, 573, "90"],
  [623, 566, "160"],
  [1004, 551, "3060"],
  [916, 696, "460"],
  [1019, 696, "2600"],
  [450, 474, "130"],
  [442, 585, "130"],
  [583, 735, "120"],
  [912, 669, "120"],
  [679, 501, "180"],
  [879, 388, "180"],
];

const V_LABELS = [
  [653, 283, "970"],
  [547, 429, "2960"],
  [585, 438, "3230"],
  [663, 432, "3060"],
  [663, 555, "770"],
  [758, 320, "660"],
  [836, 451, "4910"],
  [861, 326, "1240"],
  [861, 492, "3670"],
  [908, 326, "1240"],
  [1051, 500, "6360"],
  [1090, 326, "1240"],
  [1090, 414, "1340"],
  [1090, 532, "2140"],
  [1090, 656, "1510"],
  [1082, 696, "130"],
  [487, 614, "1700"],
  [483, 563, "90"],
  [578, 582, "780"],
  [578, 637, "810"],
  [565, 658, "110"],
  [571, 538, "270"],
  [609, 568, "600"],
  [617, 673, "2260"],
  [701, 688, "1840"],
  [813, 683, "1580"],
  [879, 662, "920"],
  [873, 635, "160"],
  [879, 706, "250"],
  [548, 714, "810"],
  [530, 698, "110"],
  [530, 732, "110"],
  [724, 740, "260"],
  [829, 723, "260"],
  [434, 735, "50"],
  [435, 559, "60"],
  [434, 511, "120"],
];

const OUTLINE =
  "M409 242H698V271H1129V369H1122V604H1129V707H1122V729H932V735H844V747H754V764H409z";

const LEADERS =
  "M438 493L445 483H457M442 505V518L437 530M438 493V530M435 577V593H448M441 552V565M492 568V561L496 557" +
  "M678 329H750M750 308L767 313V327M678 538V509H690M672 509H686L684 518M887 379V395H873M893 379V386" +
  "M573 731L579 742H590M890 700V686L905 677H919M538 703V693L556 684M538 727V737L556 746M573 652V662L587 666" +
  "M443 729V747M448 722V741M509 722V741M634 728V743M703 728V743M678 630V648M770 630V648M832 630V648M603 686V701" +
  "M740 697V728M843 697V715M882 642V629H889M1090 690V704L1097 712" +
  "M616 575H631M658 581H670M907 369H920M865 369H875M1095 604H1108M603 549H620";

function FloorPlan() {
  return (
    <svg
      viewBox="244 214 1036 629"
      className="h-full w-full"
      fill="none"
      stroke="#1446cf"
      fontFamily="Roboto, 'Noto Sans', sans-serif"
      role="img"
      aria-label="Floor plan"
    >
      <defs>
        <pattern id="cross" x="6" y="1" width="16" height="16" patternUnits="userSpaceOnUse">
          <path d="M0 0l16 16M16 0L0 16" stroke="#1b50cf" strokeWidth=".8" />
        </pattern>
        <pattern id="crossV" x="1106" y="369" width="18" height="18" patternUnits="userSpaceOnUse">
          <path d="M0 0l18 18M18 0L0 18" stroke="#1b50cf" strokeWidth=".8" />
        </pattern>
        <pattern id="crossB" x="932" y="714" width="18" height="18" patternUnits="userSpaceOnUse">
          <path d="M0 0l18 18M18 0L0 18" stroke="#1b50cf" strokeWidth=".8" />
        </pattern>
        <pattern id="crossC" x="409" y="749" width="18" height="18" patternUnits="userSpaceOnUse">
          <path d="M0 0l18 18M18 0L0 18" stroke="#1b50cf" strokeWidth=".8" />
        </pattern>
        <pattern id="zig" x="5" y="0" width="9" height="18" patternUnits="userSpaceOnUse">
          <path d="M0 0l9 9-9 9" stroke="#1b50cf" strokeWidth=".8" />
        </pattern>
        <pattern id="zigH" x="0" y="5" width="18" height="9" patternUnits="userSpaceOnUse">
          <path d="M0 9l9-9 9 9" stroke="#1b50cf" strokeWidth=".8" />
        </pattern>
        <pattern id="brick" width="13" height="13" patternUnits="userSpaceOnUse">
          <path d="M0 13L13 0M-3 13L10 0M10 13l3-3" stroke="#1b50cf" strokeWidth=".8" />
        </pattern>
        <pattern id="conc" x="2" y="4" width="20" height="19" patternUnits="userSpaceOnUse">
          <path d="M1 6l4-4M8 17l5-5M13 8l6-5M1 17l2-2" stroke="#1b50cf" strokeWidth=".8" />
        </pattern>
      </defs>

      <path d={OUTLINE} fill="#7ca4e3" />
      {WALLS.map(([x, y, w, h, hatch], i) => (
        <g key={i}>
          <rect x={x} y={y} width={w} height={h} fill="#4a87da" stroke="none" />
          {hatch && <rect x={x} y={y} width={w} height={h} fill={`url(#${hatch})`} stroke="none" />}
          <path d={w > h ? `M${x} ${y}h${w}M${x} ${y + h}h${w}` : `M${x} ${y}v${h}M${x + w} ${y}v${h}`} />
          {!hatch && <rect x={x} y={y} width={w} height={h} />}
        </g>
      ))}
      <path d="M634 750v14M703 750v14M634 750h69" />
      <path d={OUTLINE} />
      <path d="M448 747h61v20h-61zM678 242v87M513 317v12M632 317v12M563 530v27M439 530v20h63v7M678 537h20M678 625h20M881 369h20M1108 460h14M1108 369h21M1108 604h21M1108 707h21" />

      {/* windows */}
      <path
        d="M516 319h48M566 319h64M516 321h48M566 321h64M726 274h63M792 274h53M946 274h65M1014 274h52M514 317v4M565 317v12M631 317v4M791 272v10M1014 272v10"
        stroke="#0a3ab8"
        strokeWidth="2"
      />

      {/* entrance door */}
      <path d="M634 764C635 800 660 829 699 832M699 764v69h4v-69" stroke="#2b55cf" />

      {/* dimension strings */}
      {H_DIMS.map(([y, ...t], i) => (
        <path key={i} d={`M${t[0] - 4} ${y}H${t[t.length - 1] + 4}` + t.map((x) => `M${x - 4} ${y + 4}l8-8M${x} ${y - 4}v8`).join("")} />
      ))}
      {V_DIMS.map(([x, ...t], i) => (
        <path key={i} d={`M${x} ${t[0] - 4}V${t[t.length - 1] + 4}` + t.map((y) => `M${x - 4} ${y - 4}l8 8M${x - 4} ${y}h8`).join("")} />
      ))}
      <path d={LEADERS} />

      {/* shafts and vents */}
      <path d="M487 534h10v10h-10zl10 10m0-10l-10 10M509 539h10v9h-10zl10 9m0-9l-10 9M452 754h10v10h-10zl10 10m0-10l-10 10" />
      <path d="M509 531h10v7h-10zM508 514h12l-6 6zM452 748h10v4h-10zM451 731h12l-6 5z" fill="#1560d8" />
      <circle cx="438" cy="757" r="5" />
      <path d="M430 757h17M438 748v20M433 757h10" strokeWidth="1.300" />

      <g fill="#1338b5" stroke="none" fontSize="9" textAnchor="middle">
        {LABELS.map(([x, y, t], i) => (
          <text key={i} x={x} y={y + 3}>
            {t}
          </text>
        ))}
        {V_LABELS.map(([x, y, t], i) => (
          <text key={i} transform={`translate(${x + 3} ${y}) rotate(-90)`}>
            {t}
          </text>
        ))}
      </g>

      {/* elevation marks */}
      <g fontSize="11" fontFamily="'Liberation Sans', Arial, sans-serif" textAnchor="middle">
        {[
          [453, 286],
          [748, 377],
          [508, 595],
        ].map(([x, y]) => (
          <g key={x}>
            <rect x={x} y={y} width="61" height="17" fill="#fff" />
            <text x={x + 30} y={y + 12} fill="#1f45c0" stroke="none">
              +0.000
            </text>
          </g>
        ))}
        <rect x="576" y="294" width="36" height="13" fill="#fff" stroke="none" />
        <path d="M577 306h35M595 308h19l6 17M831 260h35M829 262h19M829 262l-11 21M989 262h35M987 265h20M987 265l-10 17" />
        <g fill="#1f45c0" stroke="none">
          <text x="594" y="305">+0.550</text>
          <text x="848" y="259">+0.550</text>
          <text x="1006" y="261">+0.550</text>
        </g>
      </g>
    </svg>
  );
}

function NavigationBar() {
  return (
    <div className="absolute top-px right-[1px] flex h-[102px] w-[30px] flex-col items-center rounded border border-[#b9bcc0] bg-[#f1f1f2]">
      <button type="button" aria-label="Close navigation bar" className="mr-[2px] self-end">
        <svg width="8" height="10" viewBox="0 0 8 10" fill="none" stroke="#9a9da2">
          <circle cx="4" cy="5" r="3" />
          <path d="M3 4l2 2M5 4L3 6" />
        </svg>
      </button>
      <button type="button" aria-label="Steering wheel 2D" className="mt-[5px]">
        <svg width="24" height="22" viewBox="0 0 24 22" fill="none">
          <path d="M3 9c0-8 14-8 15-1v7H9c-4 0-6-2-6-6z" stroke="#8e9aa9" strokeWidth="1.500" fill="#e3e8ee" />
          <circle cx="10" cy="9" r="3.500" stroke="#8e9aa9" strokeWidth="1.500" />
          <text x="12" y="20" fontSize="9" fill="#4c83c8" fontFamily="Liberation Sans, sans-serif">
            2D
          </text>
        </svg>
      </button>
      <svg width="5" height="4" viewBox="0 0 5 4" className="mt-1">
        <path d="M0 0h5L2.500 3z" fill="#666" />
      </svg>
      <span className="mt-[2px] h-px w-6 bg-[#b9bcc0]" />
      <button type="button" aria-label="Zoom region" className="mt-[6px]">
        <svg width="16" height="16" viewBox="0 0 16 16" fill="none">
          <path d="M1 1h10v10H1z" fill="#9fc48d" />
          <circle cx="10" cy="9" r="3.500" fill="#f4f6f8" stroke="#77828f" />
          <path d="M12.500 11.500L15 14" stroke="#77828f" strokeWidth="1.500" />
        </svg>
      </button>
      <svg width="5" height="4" viewBox="0 0 5 4" className="mt-[6px]">
        <path d="M0 0h5L2.500 3z" fill="#666" />
      </svg>
      <svg width="8" height="8" viewBox="0 0 8 8" fill="none" stroke="#9a9da2" className="mt-auto mr-[2px] mb-[2px] self-end">
        <circle cx="4" cy="4" r="3" />
        <path d="M2 4h4" />
      </svg>
    </div>
  );
}

const VIEW_ICONS = [
  <S key="detail">
    <path d="M2 3h16v14H2z" fill="#d9dadc" />
    <path d="M2 5.500h16M2 9h16M2 12.500h16" stroke="#85898f" strokeDasharray="2 2" />
    <path d="M4 7.300h14M4 11h14M4 14.500h14" stroke="#85898f" strokeDasharray="2 2" />
  </S>,
  <S key="style">
    <path d="M3 8l4-5h10v9l-4 6H3zM3 8h10v10M13 8l4-5" stroke={L} strokeWidth="1.300" />
  </S>,
  <S key="sun">
    <circle cx="8" cy="9" r="4" fill="#f3c256" />
    <path d="M8 1v3M8 14v3M0 9h3M2 3l2 2M14 3l-2 2M2 15l2-2" stroke="#f3c256" strokeWidth="1.500" />
    <Bulb x={11} y={7} />
  </S>,
  <S key="shadow">
    <ellipse cx="9" cy="16" rx="7" ry="3" fill="#0b0d11" />
    <circle cx="8" cy="7" r="6" fill={L} />
    <Bulb x={11} y={7} />
  </S>,
  <S key="crop">
    <path d="M6 18V5h12M2 14h12V1" stroke={L} strokeWidth="1.500" />
    <path d="M2 14h12V7M16 3v4" stroke={B} strokeWidth="2" />
  </S>,
  <S key="cropShow">
    <path d="M6 18V5h9M2 14h7M11 8V1" stroke={L} strokeWidth="1.500" />
    <Bulb x={11} y={7} />
  </S>,
  <S key="glasses">
    <circle cx="6" cy="12" r="3" stroke={L} strokeWidth="1.400" />
    <circle cx="13" cy="12" r="3" stroke={L} strokeWidth="1.400" />
    <path d="M5 9l5-4M12 9l5-4M9 12h1" stroke={L} strokeWidth="1.300" />
  </S>,
  <S key="reveal">
    <circle cx="10" cy="7" r="4.500" fill="#62d0dc" />
    <path d="M8 11h4v6H8z" fill="#e8e8e8" />
  </S>,
  <S key="template">
    <path d="M3 2h8v11H3z" fill={L} />
    <path d="M8 6h7v11H8z" stroke={L} strokeDasharray="2 1" />
    <path d="M12 7v9M10 10h5" stroke={L} />
  </S>,
  <S key="analytic">
    <path d="M3 6l4-4h10v10M3 6h10v10M7 6v10M3 10h13M3 16V6M10 2v10" stroke={L} />
    <path d="M3 12h8M3 16h8M7 11v7M4 11v7" stroke={R} />
    <Bulb x={12} y={7} />
  </S>,
  <S key="constraints">
    <path d="M3 1v16M15 1v8M1 4h16M1 14h9" stroke={L} strokeWidth="1.500" />
    <Bulb x={12} y={7} />
  </S>,
];

function Workspace() {
  return (
    <main className="flex min-w-0 flex-1 flex-col pt-px">
      <div className="flex h-[23px] shrink-0 items-center bg-[#454e60] pr-1">
        <div className="flex h-full w-[173px] items-center bg-[#222831] pl-1 text-[12px] font-bold text-white">
          <svg width="18" height="18" viewBox="0 0 18 18">
            <path d="M1 2h8v13H1z" fill="#dcdddf" />
            <path d="M9 4h6v3h2v9H8V7z" fill="#c4c6c9" stroke="#555" strokeWidth=".6" />
          </svg>
          <span className="ml-[7px] whitespace-nowrap">01 Обмірний план</span>
          <button type="button" aria-label="Close view" className="ml-auto pr-1">
            <X size={15} strokeWidth={2.5} color="#c6c9ce" />
          </button>
        </div>
        <button type="button" aria-label="View list" className="ml-auto pr-[2px]">
          <svg width="11" height="9" viewBox="0 0 11 9">
            <path d="M0 1h11" stroke={L} />
            <path d="M1 4h9L5.500 8.500z" fill={L} />
          </svg>
        </button>
      </div>
      <div className="flex min-h-0 flex-1">
        <div className="relative min-w-0 flex-1 bg-white">
          <FloorPlan />
          <NavigationBar />
        </div>
        <div className="flex w-[21px] flex-col items-center justify-between bg-[#2d3440] pr-[3px] text-[#a4adba]">
          <ChevronUp size={14} strokeWidth={2.5} className="mt-[2px]" />
          <span className="h-[18px] w-[6px] rounded-full bg-[#4c5868]" />
          <ChevronDown size={14} strokeWidth={2.5} className="mb-[2px]" />
        </div>
      </div>
      <div className="flex h-[21px] shrink-0 items-center bg-[#2f3642] pb-[2px] text-[#e4e5e7]">
        <button type="button" className="ml-[25px] w-[35px] text-[11px] whitespace-nowrap">
          1 : 50
        </button>
        <div className="ml-5 flex">
          {VIEW_ICONS.map((icon) => (
            <button key={icon.key} type="button" aria-label={icon.key} className="flex w-[26px] justify-center">
              {icon}
            </button>
          ))}
        </div>
        <ChevronLeft size={14} strokeWidth={2.5} className="ml-1 text-[#a4adba]" />
        <div className="flex flex-1 justify-center">
          <span className="h-[6px] w-[19px] rounded-full bg-[#4c5868]" />
        </div>
        <ChevronRight size={15} strokeWidth={2.5} className="mr-2 text-[#a4adba]" />
        <svg width="10" height="10" viewBox="0 0 10 10" className="mr-1">
          <path d="M6 1h2v2H6zM2 6h2v2H2zM6 6h2v2H6z" fill="#7b8593" />
        </svg>
      </div>
    </main>
  );
}

/* ---------- project browser ---------- */

function SheetIcon({ kind }) {
  return (
    <svg width="18" height="18" viewBox="0 0 18 18" className="shrink-0" fill="none">
      <rect x="1" y="1" width="16" height="16" stroke="#c9cbd0" strokeWidth="1.300" strokeDasharray="3 1" />
      <rect x="2" y="2" width="14" height="14" fill={kind === "b" ? "#86c5f8" : "#dadada"} stroke="#4b5563" />
    </svg>
  );
}

const Guide = ({ on, half }) => (
  <span className="flex h-full w-[18px] shrink-0 justify-center">
    {on && <span className={`w-px border-l border-dashed border-[#626b7a] ${half ? "h-1/2" : "h-full"}`} />}
  </span>
);

function TreeRow({ item }) {
  const { level, label, icon, open, active, last } = item;
  return (
    <li className={`flex items-center ${active ? "bg-[#353b49] font-bold text-white" : ""}`}>
      {level > 0 && <Guide on />}
      {level > 1 && <Guide on half={last && level === 2} />}
      {level > 2 && <Guide on half={last} />}
      {level > 0 && (
        <span className={`-ml-2 border-t border-dashed border-[#626b7a] ${level === 1 ? "w-[9px]" : open ? "w-2" : "w-[27px]"}`} />
      )}
      {open && (
        <button
          type="button"
          aria-label={`Collapse ${label}`}
          className={`flex w-[18px] shrink-0 justify-center ${level === 1 ? "-ml-px" : ""}`}
        >
          <span className="h-[2px] w-[9px] bg-[#aab0ba]" />
        </button>
      )}
      {level === 0 && (
        <svg width="17" height="18" viewBox="0 0 17 18" fill="none" className="ml-[6px]">
          <path d="M1 5V1h4M12 1h4v4M16 13v4h-4M5 17H1v-4" stroke={L} strokeWidth="1.500" />
          <path d="M4 7l3-3h6v6l-3 4H4z" fill={L} />
        </svg>
      )}
      {icon && (
        <span className={open ? "ml-[5px]" : "ml-1"}>
          <SheetIcon kind={icon} />
        </span>
      )}
      <span className={`whitespace-nowrap ${level === 1 ? "ml-[6px]" : level === 0 ? "ml-[5px]" : "ml-1"}`}>{label}</span>
    </li>
  );
}

function ProjectBrowser() {
  return (
    <aside className="flex w-[379px] shrink-0 flex-col border-l-2 border-[#4a5465] bg-[#3c4454] pt-px text-[12px] text-[#e4e5e7]">
      <div className="flex h-[17px] shrink-0 items-center justify-between bg-[#222831] pl-[3px]">
        <h2 className="pt-px">Project Browser - OkLand 1</h2>
        <button type="button" aria-label="Close browser" className="-mr-[2px]">
          <X size={15} strokeWidth={2.5} />
        </button>
      </div>
      <label className="mt-[10px] mr-2 ml-[10px] flex h-[26px] shrink-0 items-center bg-[#2d333f] pl-[8px]">
        <Search size={19} strokeWidth={2} color="#9fa5af" />
        <input
          type="search"
          placeholder="Search"
          aria-label="Search"
          className="ml-[8px] flex-1 bg-transparent outline-none placeholder:text-[#8f959f]"
        />
      </label>
      <div className="mt-[10px] flex h-0 grow overflow-hidden border-b-2 border-[#2d3440]">
        <ul className="grid h-[613px] flex-1 auto-rows-fr pl-[2px]">
          {TREE.map((item, i) => (
            <TreeRow key={i} item={item} />
          ))}
        </ul>
        <div className="flex w-[17px] flex-col items-center bg-[#2d3440] text-[#a4adba]">
          <ChevronUp size={14} strokeWidth={2.5} />
          <span className="mt-[9px] h-[97px] w-[6px] rounded-full bg-[#4c5868]" />
          <ChevronDown size={14} strokeWidth={2.5} className="mt-auto" />
        </div>
      </div>
    </aside>
  );
}

/* ---------- status bar ---------- */

const SELECT_TOOLS = [
  <S key="links">
    <path d="M8 3H4a3 3 0 0 0 0 5h3M6 5.500h6M11 3h4a3 3 0 0 1 0 5h-3" stroke="#c79a78" strokeWidth="1.600" />
    <Cursor x={10} y={6} />
  </S>,
  <S key="underlay">
    <path d="M2 8l5-5h5l-3 5zM1 14l5-5h6l-3 5z" fill={B} />
    <path d="M11 1l7 7M18 1l-7 7" stroke={R} strokeWidth="2" />
    <Cursor x={9} y={6} />
  </S>,
  <S key="pinned">
    <path d="M3 2h9v3h-2v4l3 2v2H2v-2l3-2V5H3z" fill={L} />
    <Cursor x={9} y={6} />
  </S>,
  <S key="face">
    <path d="M3 6l9-5v13l-9 5z" fill={B} />
    <Cursor x={10} y={6} />
  </S>,
  <S key="drag">
    <path d="M7 3v12M1 9h12M5 5l2-2 2 2M3 7L1 9l2 2M5 13l2 2 2-2" stroke={L} strokeWidth="1.500" />
    <path d="M11 1l7 7M18 1l-7 7" stroke={R} strokeWidth="2" />
    <Cursor x={10} y={6} />
  </S>,
  <S key="background">
    <circle cx="10" cy="10" r="7" stroke="#858b96" strokeWidth="2.500" strokeDasharray="2.500 3" />
  </S>,
];

function StatusBar() {
  const [exclude, setExclude] = useState(true);

  return (
    <footer className="flex h-[28px] shrink-0 items-center border-t border-[#4a5465] bg-[#3c4454] pb-[3px] text-[12px] text-[#e4e5e7]">
      <p className="w-[600px] pt-[3px] pl-[2px] whitespace-nowrap">
        Click to select, TAB for alternates, CTRL adds, SHIFT unselects.
      </p>
      <S>
        <path d="M2 4l4-3 4 3v9l-4 3-4-3z" fill={B} />
        <path d="M9 3l4-2 4 3v7l-4 3-4-3z" fill="#ec8a4b" />
        <path d="M6 9l4-2 3 2v7l-3 3-4-2z" fill="#54bd76" />
        <path d="M13 17l6-7" stroke={B} strokeWidth="2" />
      </S>
      <label className="relative ml-[6px] flex h-full w-[227px] items-center border-b border-[#66758a]">
        <select aria-label="Active workset" className="w-full appearance-none bg-transparent outline-none">
          <option></option>
        </select>
        <ChevronDown size={11} strokeWidth={2} className="absolute right-1 text-[#66708a]" />
      </label>
      <button type="button" className="ml-1 flex items-center text-[#9097a3]">
        <S>
          <path d="M7 2h9v7h-2l-4 3v6H2v-5l4-3h1z" fill="#9b9fa8" />
          <path d="M6 12l3 2 5-5" stroke="#555" strokeWidth="1.300" />
        </S>
        :0
      </button>
      <button type="button" aria-label="Design options" className="ml-[22px]">
        <S>
          <path d="M2 1h16v17H2z" fill={L} />
          <path d="M4 6h2M4 10h2M4 14h2M8 6h8M8 10h8M8 14h8" stroke="#4a505b" strokeWidth="1.500" />
        </S>
      </button>
      <button type="button" aria-label="Add to set" className="ml-[6px]">
        <S>
          <path d="M4 1h15v14H4z" fill={L} />
          <path d="M7 5h2M7 9h2M11 5h6M11 9h6M9 12h8" stroke="#4a505b" strokeWidth="1.500" />
          <path d="M1 15h6M5 11l4 4-4 4z" stroke={B} strokeWidth="1.500" fill={B} />
        </S>
      </button>
      <label className="relative ml-[6px] flex h-full w-[227px] items-center border-b border-[#7b8ca3] pt-[2px]">
        <select aria-label="Active design option" className="w-full appearance-none bg-transparent pl-[2px] outline-none">
          <option>Main Model</option>
        </select>
        <ChevronDown size={11} strokeWidth={2} className="absolute right-1 text-[#a4adba]" />
      </label>
      <label className="ml-[3px] flex items-center gap-[3px] pt-[2px] whitespace-nowrap">
        <input
          type="checkbox"
          checked={exclude}
          onChange={(e) => setExclude(e.target.checked)}
          className="h-[11px] w-[11px] accent-[#aeb6c2]"
        />
        Exclude Options
      </label>
      <div className="ml-auto flex items-center gap-[6px] pr-[54px]">
        {SELECT_TOOLS.map((icon) => (
          <button key={icon.key} type="button" aria-label={icon.key}>
            {icon}
          </button>
        ))}
        <button type="button" className="ml-[-2px] flex items-center">
          <svg width="20" height="18" viewBox="0 0 20 18">
            <path d="M0 1h20v2l-7 7v6l-4 2v-8L0 3z" fill={L} />
          </svg>
          :101
        </button>
      </div>
    </footer>
  );
}

export default function App() {
  return (
    <div className="flex min-h-screen flex-col bg-[#1f2632] font-['Noto_Sans','Open_Sans',sans-serif]">
      <TitleBar />
      <TabStrip />
      <Ribbon />
      <div className="flex h-[30px] shrink-0 items-center border-b border-[#4a5465] bg-[#434f54] pt-[2px] pl-[10px] text-[12px] text-[#e4e5e7]">
        Modify | Multi-Select
      </div>
      <div className="flex flex-1">
        <PropertiesPalette />
        <Workspace />
        <ProjectBrowser />
      </div>
      <StatusBar />
      <div className="h-[2px] shrink-0" />
    </div>
  );
}
